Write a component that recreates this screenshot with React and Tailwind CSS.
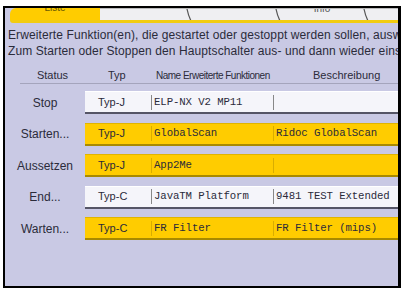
import React from 'react';

const rows = [
  { status: 'Stop', typ: 'Typ-J', name: 'ELP-NX V2 MP11', desc: '', active: false },
  { status: 'Starten...', typ: 'Typ-J', name: 'GlobalScan', desc: 'Ridoc GlobalScan', active: true },
  { status: 'Aussetzen', typ: 'Typ-J', name: 'App2Me', desc: '', active: true },
  { status: 'End...', typ: 'Typ-C', name: 'JavaTM Platform', desc: '9481 TEST Extended', active: false },
  { status: 'Warten...', typ: 'Typ-C', name: 'FR Filter', desc: 'FR Filter (mips)', active: true },
];

const Slant = () => (
  <svg width="6" height="12" viewBox="0 0 6 12" className="shrink-0">
    <path d="M1 0 C2 5 3 8 5 12" stroke="#555" strokeWidth="1.2" fill="none" />
  </svg>
);

const App = () => {
  return (
    <div className="w-[401px] h-[290px] bg-white pt-[6px] pl-[3px] font-['Liberation_Sans',sans-serif] text-[#2b2b3a] overflow-hidden">
      {/* Frame */}
      <div className="w-[398px] h-[282px] border-2 border-r-[3px] border-black bg-[#c9c9e4] flex flex-col overflow-hidden">
        {/* Tabs */}
        <div className="flex h-[12px] pl-[5px] bg-[#c9c9e4]">
          <div className="w-[90px] bg-[#ffcc00] rounded-tl-[6px] flex justify-center overflow-hidden">
            <span className="text-[10px] leading-none -mt-[5px] text-[#6b5a00]">Liste</span>
          </div>
          <div className="flex-1 flex bg-[#efeff2] border-t border-[#bbb]">
            <div className="w-[86px]" />
            <Slant />
            <div className="w-[83px]" />
            <Slant />
            <div className="w-[82px] flex justify-center overflow-hidden">
              <span className="text-[10px] leading-none -mt-[5px] text-[#555]">Info</span>
            </div>
            <Slant />
            <div className="flex-1" />
          </div>
        </div>
        <div className="h-[3px] ml-[5px] bg-[#f2cc10] rounded-bl-[3px]" />

        {/* Instructions */}
        <div className="pl-[3px] pt-[4px] text-[12px] leading-[16px] whitespace-nowrap tracking-[0.1px]">
          <p>Erweiterte Funktion(en), die gestartet oder gestoppt werden sollen, auswählen.</p>
          <p>Zum Starten oder Stoppen den Hauptschalter aus- und dann wieder einschalten.</p>
        </div>

        {/* Header */}
        <div className="mt-[9px] ml-[15px] flex h-[16px] items-center border-b border-[#a4a4bc] text-[10px] whitespace-nowrap">
          <div className="w-[65px] text-center text-[11px]">Status</div>
          <div className="w-[68px] pl-[23px] text-[11px]">Typ</div>
          <div className="w-[160px] pl-[3px] tracking-[-0.5px]">Name Erweiterte Funktionen</div>
          <div className="text-[11px]">Beschreibung</div>
        </div>

        {/* Rows */}
        <div className="mt-[7px] flex flex-col gap-[8.5px]">
          {rows.map((r) => (
            <div key={r.status} className="flex items-stretch h-[23px]">
              <div className="w-[80px] flex items-center justify-center text-[12px]">{r.status}</div>
              <div
                className={`flex-1 flex items-center text-[10.7px] whitespace-nowrap overflow-hidden ${
                  r.active
                    ? 'bg-[#ffcc00] border-b-2 border-[#a88a00] border-t border-t-[#e0b400]'
                    : 'bg-[#f5f5fa] border-b-2 border-[#555566] border-t border-t-[#ffffff]'
                }`}
              >
                <div className="w-[66px] pl-[13px] text-[11px]">{r.typ}</div>
                <div
                  className={`w-[122px] h-[15px] flex items-center pl-[2px] border-l font-['Liberation_Mono',monospace] tracking-[-0.1px] ${
                    r.active ? 'border-[#d9ad00]' : 'border-[#888]'
                  }`}
                >
                  {r.name}
                </div>
                <div
                  className={`flex-1 h-[15px] flex items-center pl-[2px] border-l font-['Liberation_Mono',monospace] tracking-[-0.1px] ${
                    r.active ? 'border-[#d9ad00]' : 'border-[#888]'
                  }`}
                >
                  {r.desc}
                </div>
              </div>
            </div>
          ))}
        </div>
      </div>
    </div>
  );
};

export default App;
